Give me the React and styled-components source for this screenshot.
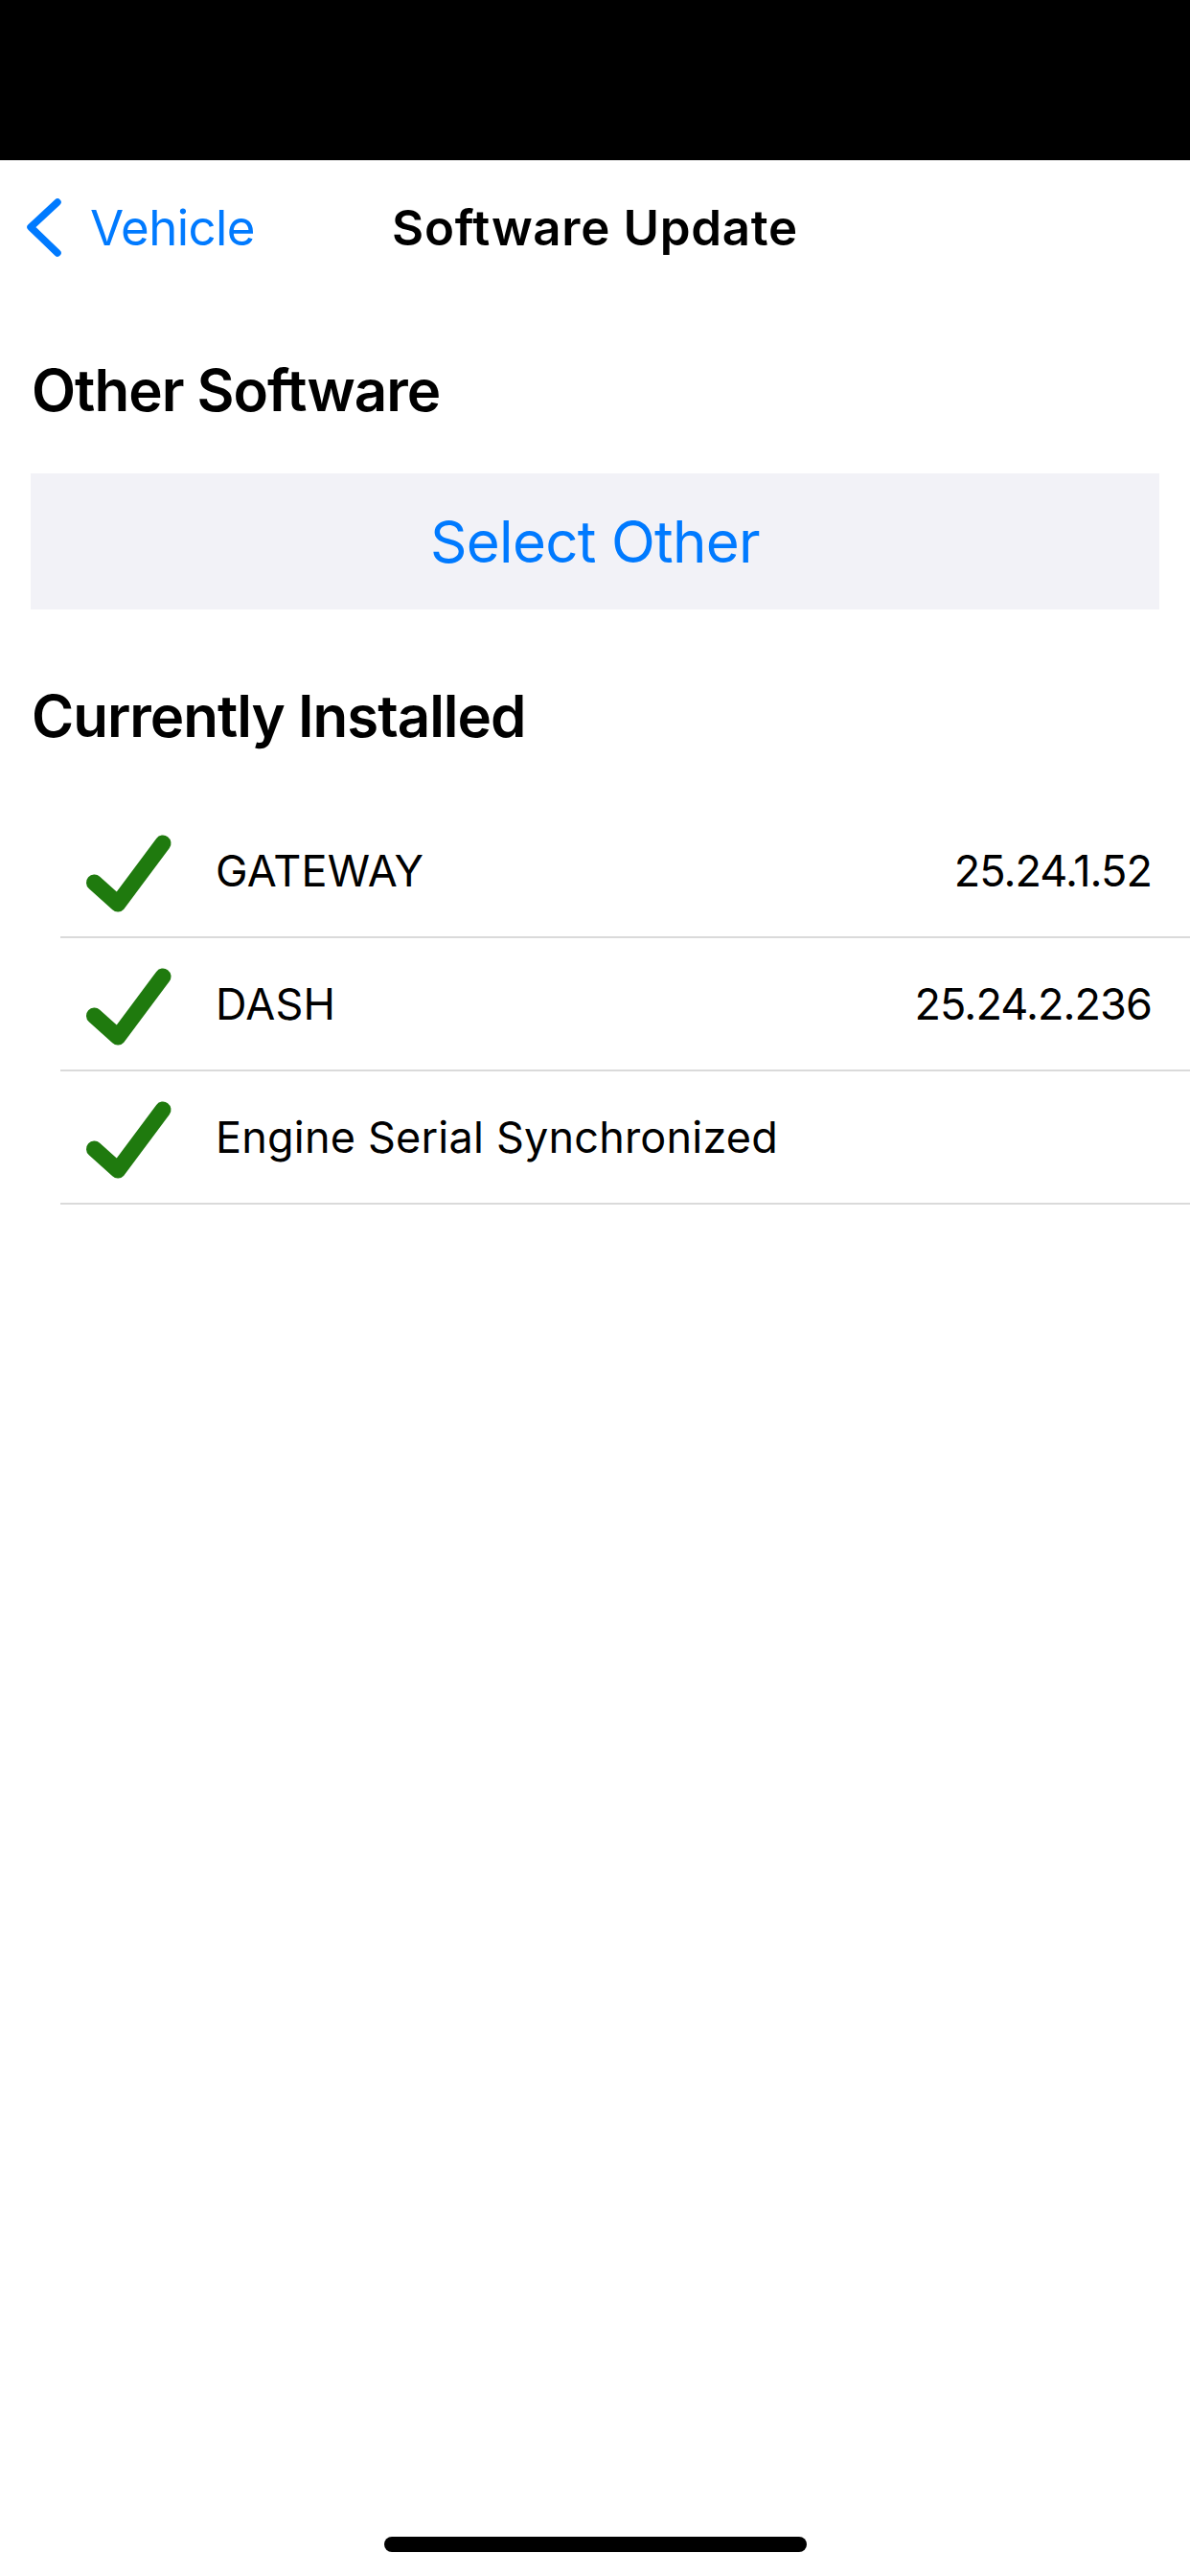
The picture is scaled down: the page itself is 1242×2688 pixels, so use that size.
import styled, { createGlobalStyle } from "styled-components";

const GlobalStyle = createGlobalStyle`
  html, body {
    margin: 0;
    padding: 0;
    background: #ffffff;
  }
  body {
    font-family: Inter, "Noto Sans", "Liberation Sans", sans-serif;
    color: #000000;
    -webkit-font-smoothing: antialiased;
  }
`;

const Screen = styled.div`
  width: 1242px;
  height: 2688px;
  display: flex;
  flex-direction: column;
  background: #ffffff;
  overflow: hidden;
`;

const StatusBar = styled.div`
  height: 167px;
  background: #000000;
  border-bottom: 1px solid #d4d4d4;
  flex-shrink: 0;
`;

const NavBar = styled.div`
  box-sizing: border-box;
  height: 132px;
  padding-top: 6px;
  display: grid;
  grid-template-columns: 1fr auto 1fr;
  align-items: center;
`;

const BackButton = styled.div`
  display: flex;
  align-items: center;
  gap: 28px;
  padding-left: 26px;
  color: #007aff;
  font-size: 51px;
  font-weight: 400;
  letter-spacing: -0.6px;
`;

const NavTitle = styled.div`
  font-size: 51px;
  font-weight: 600;
  letter-spacing: 0.7px;
  color: #000000;
`;

const Content = styled.div`
  padding: 0 32px;
  display: flex;
  flex-direction: column;
`;

const SectionTitle = styled.h2`
  margin: ${(p) => p.$top}px 0 0 1px;
  font-size: 60px;
  line-height: 72px;
  font-weight: 600;
  letter-spacing: -1px;
`;

const SelectButton = styled.div`
  margin-top: 51px;
  height: 142px;
  background: #f2f2f7;
  display: flex;
  align-items: center;
  justify-content: center;
  color: #007aff;
  font-size: 60px;
  font-weight: 400;
  letter-spacing: -0.7px;
`;

const List = styled.div`
  margin: 57px 0 0 63px;
  display: flex;
  flex-direction: column;
`;

const Row = styled.div`
  height: 137px;
  display: flex;
  align-items: center;
  padding: 0 40px 0 22px;
  border-bottom: 2px solid #dadada;
  font-size: 45px;
  font-weight: 400;
  letter-spacing: 0.2px;
  color: #000000;
`;

const CheckMark = styled.svg`
  width: 100px;
  height: 100px;
  flex-shrink: 0;
  margin-right: 40px;
`;

const RowLabel = styled.span`
  flex: 1;
`;

const RowValue = styled.span`
  text-align: right;
  letter-spacing: -0.9px;
`;

const HomeBar = styled.div`
  margin: auto auto 25px;
  width: 441px;
  height: 16px;
  border-radius: 8px;
  background: #000000;
`;

const installed = [
  { name: "GATEWAY", version: "25.24.1.52" },
  { name: "DASH", version: "25.24.2.236" },
  { name: "Engine Serial Synchronized", version: "" },
];

function Check() {
  return (
    <CheckMark viewBox="0 0 100 100">
      <path
        d="M13.5 62 L38 84 L85 21"
        fill="none"
        stroke="#1f7a0e"
        strokeWidth="17"
        strokeLinecap="round"
        strokeLinejoin="round"
      />
    </CheckMark>
  );
}

export default function App() {
  return (
    <>
      <GlobalStyle />
      <Screen>
        <StatusBar />
        <NavBar>
          <BackButton>
            <svg width="40" height="62" viewBox="0 0 40 62">
              <path
                d="M34 5 L6 31 L34 58"
                fill="none"
                stroke="#007aff"
                strokeWidth="7.5"
                strokeLinecap="round"
                strokeLinejoin="round"
              />
            </svg>
            Vehicle
          </BackButton>
          <NavTitle>Software Update</NavTitle>
          <div />
        </NavBar>
        <Content>
          <SectionTitle $top={71}>Other Software</SectionTitle>
          <SelectButton>Select Other</SelectButton>
          <SectionTitle $top={75}>Currently Installed</SectionTitle>
        </Content>
        <List>
          {installed.map((item) => (
            <Row key={item.name}>
              <Check />
              <RowLabel>{item.name}</RowLabel>
              <RowValue>{item.version}</RowValue>
            </Row>
          ))}
        </List>
        <HomeBar />
      </Screen>
    </>
  );
}
